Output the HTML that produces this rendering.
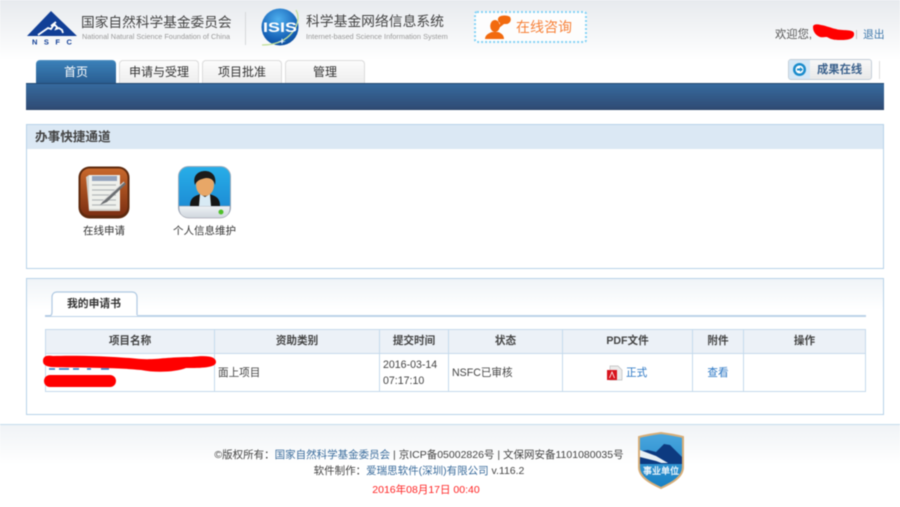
<!DOCTYPE html>
<html lang="zh"><head><meta charset="utf-8"><title>科学基金网络信息系统</title>
<style>
*{box-sizing:border-box}
html,body{margin:0;padding:0}
body{width:900px;height:507px;overflow:hidden;position:relative;background:#fff;font:12px "Liberation Sans","WenQuanYi Zen Hei","Noto Sans CJK SC",sans-serif;color:#333}
.a{position:absolute;white-space:nowrap}
#wrap{position:absolute;left:0;top:0;width:900px;height:507px;filter:blur(.4px);background:#fff}
#top{left:0;top:0;width:900px;height:60px;background:linear-gradient(#e7eaee,#fff)}
.tab{position:absolute;top:60px;height:23px;width:80px;border:1px solid #dcdcdc;border-bottom:0;border-radius:4px 4px 0 0;background:linear-gradient(#fcfcfc,#eeeeee);text-align:center;font-size:12px;line-height:23px;color:#333}
.panel{position:absolute;left:26px;width:858px;border:1px solid #b7d2e8;background:#fff}
table{position:absolute;left:45px;top:329px;width:821px;height:63px;border-collapse:collapse;table-layout:fixed;border:1px solid #c5daec}
th,td{border:1px solid #c5daec;font-size:10.6px;padding:0}
th{height:24px;background:#ecf1f7;color:#444;text-align:center;padding-bottom:2px}
td{color:#444}
.lk{color:#2a76c4}
.foot{position:absolute;left:0;width:900px;text-align:center;font-size:10.5px;color:#444}
.foot span{color:#3a6c9c}
</style></head><body><div id="wrap">
<div class="a" id="top"></div>

<svg class="a" style="left:26px;top:10px" width="52" height="37" viewBox="0 0 52 37">
<path d="M1 26L25 1 51 26z" fill="#123f96"/>
<path d="M12 25L22 18l3 1 2-3 2-1 2 2-1 2 3-1 3 2 1 3M30 12l-5 4" fill="none" stroke="#fff" stroke-width="1.800"/>
<text x="6" y="34.500" font-family="Liberation Sans" font-weight="bold" font-size="7.500" letter-spacing="6.500" fill="#123f96">NSFC</text>
</svg>
<div class="a" style="left:81px;top:15px;font-size:13.7px;line-height:16px;color:#444">国家自然科学基金委员会</div>
<div class="a" style="left:82px;top:32px;font-size:7.300px;line-height:10px;color:#999">National Natural Science Foundation of China</div>
<div class="a" style="left:245px;top:12px;width:1px;height:33px;background:#d6d8da"></div>

<svg class="a" style="left:259px;top:7px" width="42" height="40" viewBox="0 0 42 40">
<defs><radialGradient id="g" cx=".45" cy=".3" r=".75"><stop offset="0" stop-color="#4fb0ee"/><stop offset=".7" stop-color="#1763b8"/><stop offset="1" stop-color="#0c4a98"/></radialGradient></defs>
<circle cx="21" cy="20" r="18.500" fill="url(#g)"/>
<path d="M37 3c4 7 2 17-6 25-7 7-16 10-28 10" fill="none" stroke="#c3e09a" stroke-width="1.300"/>
<text x="4" y="25" textLength="34" lengthAdjust="spacingAndGlyphs" font-family="Liberation Sans" font-weight="bold" font-size="14" fill="#fff">ISIS</text>
<path d="M22 34l1-3 1 3 3 .5-3 .5-1 2-1-2-3-.5z" fill="#dfeefa"/>
</svg>
<div class="a" style="left:306px;top:14px;font-size:13.8px;line-height:16px;color:#444">科学基金网络信息系统</div>
<div class="a" style="left:306px;top:32px;font-size:7.400px;line-height:10px;color:#999">Internet-based Science Information System</div>

<div class="a" style="left:474px;top:11px;width:113px;height:32px;border:2px dotted #84d2f5;background:#fdfdfd;border-radius:3px"></div>
<svg class="a" style="left:484px;top:14px" width="28" height="26" viewBox="0 0 28 26">
<ellipse cx="11" cy="12" rx="4.800" ry="6" fill="#f26a0e"/>
<path d="M1 25c0-4 4-6 7-7h6c3 1 6 3 6 7z" fill="#f26a0e"/>
<path d="M15 3c2-2 9-2 11 0 2 3 0 7-4 7h-2l-5 4 1-5c-2-1-3-4-1-6z" fill="#f26a0e"/>
</svg>
<div class="a" style="left:516px;top:19px;font-size:14px;line-height:17px;color:#f7823a">在线咨询</div>

<div class="a" style="left:775px;top:28px;font-size:11.300px;line-height:14px;color:#555">欢迎您,</div>
<svg class="a" style="left:812px;top:23px" width="44" height="18" viewBox="0 0 44 18"><path d="M1 4c0-3 4-3 8-2 6 1 10 3 15 4 6 2 17 0 18 4 1 6-6 7-13 7-9 0-10-1-14-3-4 0-6 1-9-1C3 11 1 8 1 4z" fill="#f00"/></svg>
<div class="a" style="left:856px;top:30px;width:1px;height:9px;background:#c4c4c4"></div>
<div class="a" style="left:863px;top:28px;font-size:10.800px;line-height:14px;color:#3e78ab">退出</div>

<div class="tab" style="left:36px;border:0;background:linear-gradient(#3a80b8,#2a5e92);color:#fff;border-top:1px solid #4d8ec0">首页</div>
<div class="tab" style="left:119px;">申请与受理</div>
<div class="tab" style="left:202px;">项目批准</div>
<div class="tab" style="left:285px;">管理</div>

<div class="a" style="left:788px;top:59px;width:84px;height:21px;border:1px solid #c4ced8;border-radius:3px;background:linear-gradient(#f8f8f8,#e9e9e9)"></div>
<div class="a" style="left:789px;top:60px;width:21px;height:19px;background:#d5e8f6;border-radius:2px 0 0 2px"></div>
<svg class="a" style="left:792px;top:62px" width="15" height="15" viewBox="0 0 15 15"><circle cx="7.500" cy="7.500" r="6.500" fill="#1a8ccc"/><circle cx="7.500" cy="7.500" r="4" fill="#fff"/><path d="M5 6.500h3V5l3 2.500-3 2.500V8.500H5z" fill="#1a8ccc"/></svg>
<div class="a" style="left:817px;top:63px;font-size:11.300px;font-weight:bold;line-height:14px;color:#3b618c">成果在线</div>
<div class="a" style="left:879px;top:61px;width:1px;height:18px;background:#dcdcdc"></div>

<div class="a" style="left:26px;top:83px;width:858px;height:27px;background:linear-gradient(#366a9e,#2f4b74);border-top:1px solid #234a72;border-bottom:1px solid #2a4468"></div>

<div class="panel" style="top:124px;height:145px"></div>
<div class="a" style="left:27px;top:125px;width:856px;height:24px;background:#dbe8f4"></div>
<div class="a" style="left:35px;top:129px;font-size:12.600px;font-weight:bold;line-height:16px;color:#444">办事快捷通道</div>

<svg class="a" style="left:78px;top:166px" width="52" height="53" viewBox="0 0 52 53">
<defs><linearGradient id="w" x1="0" y1="0" x2="0" y2="1"><stop offset="0" stop-color="#c8682c"/><stop offset="1" stop-color="#7c2f12"/></linearGradient></defs>
<rect x=".5" y=".5" width="51" height="52" rx="11" fill="#5e2a0e"/>
<rect x="2.500" y="2.500" width="47" height="47" rx="9" fill="url(#w)"/>
<path d="M8 11l3-2v34h31v2H11z" fill="#cfcfca"/>
<rect x="11" y="9" width="31" height="34" fill="#eff0ec"/>
<rect x="14" y="10" width="25" height="5" fill="#94a3bc"/>
<path d="M14 19h24M14 24h24M14 29h24M14 34h24M14 39h24" stroke="#b4b8ba" stroke-width="1.200"/>
<path d="M46 16L27 33l-5 6 7-3 19-18z" fill="#6c6f72"/>
<path d="M46 16L25 35" stroke="#dadada" stroke-width="1"/>
</svg>
<svg class="a" style="left:178px;top:166px" width="53" height="53" viewBox="0 0 53 53">
<defs><linearGradient id="b" x1="0" y1="0" x2="0" y2="1"><stop offset="0" stop-color="#28aee8"/><stop offset="1" stop-color="#1a84d0"/></linearGradient>
<linearGradient id="c" x1="0" y1="0" x2="0" y2="1"><stop offset="0" stop-color="#eef2f6"/><stop offset="1" stop-color="#cfd6dc"/></linearGradient></defs>
<rect x=".5" y=".5" width="52" height="51" rx="10" fill="url(#b)" stroke="#9ab"/>
<path d="M1 40h51v2c0 6-4 10-10 10H11C5 52 1 48 1 42z" fill="url(#c)" stroke="#889" stroke-width=".5"/>
<path d="M12 40c0-8 4-10 11-12h8c7 2 11 4 11 12z" fill="#161616"/>
<path d="M22 28l5 3 5-3 1 12H21z" fill="#d8eaf4"/>
<ellipse cx="27" cy="19" rx="9" ry="11" fill="#e8a767"/>
<path d="M17 19c-3-10 4-14 10-14 6 0 12 4 10 14-1-4-3-7-9-7-5 1-9 2-11 7z" fill="#1b1b1b"/>
<circle cx="43" cy="46" r="2.500" fill="#4ec02a"/>
</svg>
<div class="a" style="left:83px;top:224px;font-size:10.500px;line-height:14px;color:#333">在线申请</div>
<div class="a" style="left:173px;top:224px;font-size:10.500px;line-height:14px;color:#333">个人信息维护</div>

<div class="panel" style="top:278px;height:137px;background:linear-gradient(#f0f4f8,#fff 30px)"></div>
<div class="a" style="left:45px;top:315px;width:821px;height:1.500px;background:#bcd2e8"></div>
<svg class="a" style="left:45px;top:291px" width="97" height="27" viewBox="0 0 97 27"><path d="M0 25h3c3 0 4-1 4-4V6c0-3 2-5 5-5h75c3 0 5 2 5 5v19h-92z" fill="#fff"/><path d="M0 25h3c3 0 4-1 4-4V6c0-3 2-5 5-5h75c3 0 5 2 5 5v18" fill="none" stroke="#b0c9e2" stroke-width="1.200"/></svg>
<div class="a" style="left:67px;top:297px;font-size:10.800px;font-weight:bold;line-height:14px;color:#333">我的申请书</div>

<table>
<colgroup><col style="width:169px"><col style="width:165px"><col style="width:69px"><col style="width:114px"><col style="width:130px"><col style="width:51px"><col></colgroup>
<tr><th>项目名称</th><th>资助类别</th><th>提交时间</th><th>状态</th><th>PDF文件</th><th>附件</th><th>操作</th></tr>
<tr style="height:38px"><td></td><td style="padding-left:3px">面上项目</td><td style="padding-left:3px;line-height:16px">2016-03-14<br>07:17:10</td><td style="padding-left:3px">NSFC已审核</td><td style="padding-left:45px"><span class="lk" style="margin-left:18px">正式</span></td><td style="text-align:center"><span class="lk">查看</span></td><td></td></tr>
</table>
<svg class="a" style="left:41px;top:353px" width="178" height="36" viewBox="0 0 178 36">
<path d="M8 16h6M18 16h10M32 16h6M46 16h4M60 16h8" stroke="#2a76c4" stroke-width="1.500"/>
<path d="M2 8C2 3 6 2 12 3c28-1 68 1 88 3 15 1 25-2 50-2 15-2 25-1 25 5 0 6-15 6-30 6-10 4-30 5-45 2-30-3-70-2-90-3C5 13 2 12 2 8z" fill="#f00"/>
<rect x="3" y="22" width="72" height="12" rx="6" fill="#f00"/>
</svg>
<svg class="a" style="left:607px;top:365px" width="16" height="16" viewBox="0 0 16 16"><path d="M3 1h8l4 4v10H3z" fill="#ececec" stroke="#bbb" stroke-width=".7"/><rect x="0" y="5" width="10" height="10" fill="#d8141e"/><path d="M2.500 13l2.500-6 2.500 6" fill="none" stroke="#fff" stroke-width=".8"/></svg>

<div class="a" style="left:0;top:424px;width:900px;height:40px;border-top:1px solid #c4dcec;background:linear-gradient(#f0f3f6,#fff)"></div>
<div class="foot" style="top:447px;left:-31px;">©版权所有：<span>国家自然科学基金委员会</span> | 京ICP备05002826号 | 文保网安备1101080035号</div>
<div class="foot" style="top:463px;left:-31px;">软件制作：<span>爱瑞思软件(深圳)有限公司</span> v.116.2</div>
<div class="foot" style="top:482px;left:-24px;color:#f22">2016年08月17日 00:40</div>
<svg class="a" style="left:637px;top:432px" width="48" height="57" viewBox="0 0 48 57">
<defs><linearGradient id="s" x1="0" y1="0" x2="0" y2="1"><stop offset="0" stop-color="#4aa6de"/><stop offset="1" stop-color="#1780c4"/></linearGradient></defs>
<path d="M2 5c8-2 14-3 22-4 8 1 14 2 22 4v30c0 10-11 16-22 21C13 51 2 45 2 35z" fill="url(#s)" stroke="#d8ae78" stroke-width="2"/>
<path d="M3 19l8-1 8 2 8-8 6 1 12 12v7H3z" fill="#0d3a80"/>
<path d="M3 18l16 6 12 7H3z" fill="#e8f0f6"/>
<path d="M3 25l16 4 8 3H3z" fill="#0d3a80"/>
<text x="24" y="42" text-anchor="middle" font-family="Liberation Sans,WenQuanYi Zen Hei,sans-serif" font-weight="bold" font-size="9" fill="#e8f3fa">事业单位</text>
</svg>
</div></body></html>
